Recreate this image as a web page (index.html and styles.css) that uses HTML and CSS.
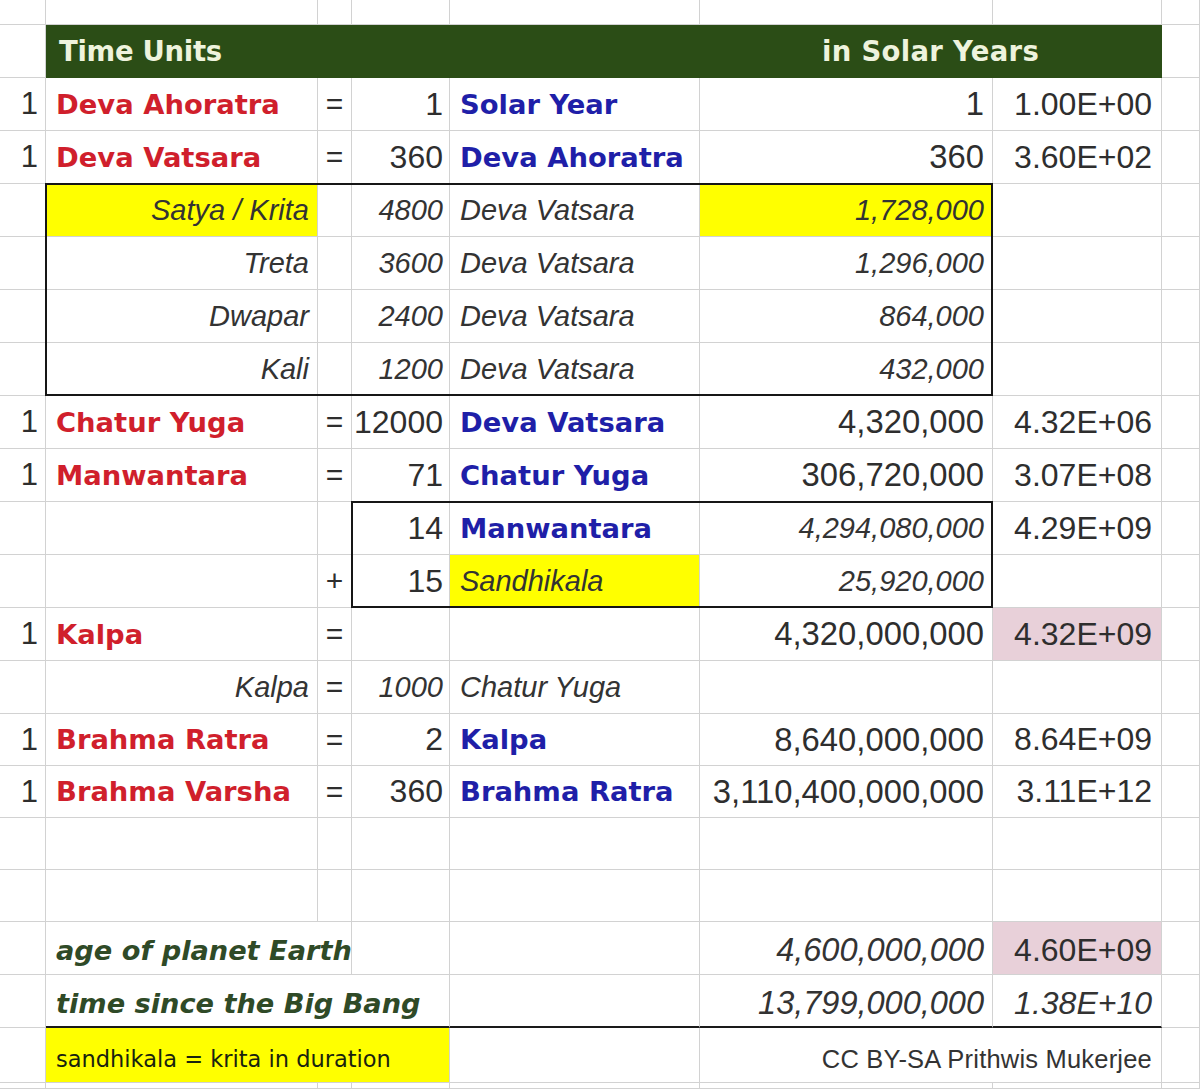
FILE: index.html
```html
<!DOCTYPE html>
<html>
<head>
<meta charset="utf-8">
<title>Time Units in Solar Years</title>
<link rel="stylesheet" href="styles.css">
</head>
<body>
<div class="stack">
<div class="sheet">
  <!-- row 0 (partial) -->
  <div class="c"></div><div class="c"></div><div class="c"></div><div class="c"></div><div class="c"></div><div class="c"></div><div class="c"></div><div class="c"></div>

  <!-- header -->
  <div class="c"></div>
  <div class="c hd hd-left span-be">Time Units</div>
  <div class="c hd hd-center span-fg">in Solar Years</div>
  <div class="c"></div>

  <!-- r1 -->
  <div class="c ca">1</div>
  <div class="c cb"><span class="term red">Deva Ahoratra</span></div>
  <div class="c cc">=</div>
  <div class="c cd">1</div>
  <div class="c ce"><span class="term blue">Solar Year</span></div>
  <div class="c cf">1</div>
  <div class="c cg">1.00E+00</div>
  <div class="c"></div>

  <!-- r2 -->
  <div class="c ca">1</div>
  <div class="c cb"><span class="term red">Deva Vatsara</span></div>
  <div class="c cc">=</div>
  <div class="c cd">360</div>
  <div class="c ce"><span class="term blue">Deva Ahoratra</span></div>
  <div class="c cf">360</div>
  <div class="c cg">3.60E+02</div>
  <div class="c"></div>

  <!-- r3 -->
  <div class="c ca"></div>
  <div class="c cb-r yel"><span class="it">Satya / Krita</span></div>
  <div class="c cc"></div>
  <div class="c cd"><span class="it">4800</span></div>
  <div class="c ce"><span class="it">Deva Vatsara</span></div>
  <div class="c cf yel"><span class="it">1,728,000</span></div>
  <div class="c cg"></div>
  <div class="c"></div>

  <!-- r4 -->
  <div class="c ca"></div>
  <div class="c cb-r"><span class="it">Treta</span></div>
  <div class="c cc"></div>
  <div class="c cd"><span class="it">3600</span></div>
  <div class="c ce"><span class="it">Deva Vatsara</span></div>
  <div class="c cf"><span class="it">1,296,000</span></div>
  <div class="c cg"></div>
  <div class="c"></div>

  <!-- r5 -->
  <div class="c ca"></div>
  <div class="c cb-r"><span class="it">Dwapar</span></div>
  <div class="c cc"></div>
  <div class="c cd"><span class="it">2400</span></div>
  <div class="c ce"><span class="it">Deva Vatsara</span></div>
  <div class="c cf"><span class="it">864,000</span></div>
  <div class="c cg"></div>
  <div class="c"></div>

  <!-- r6 -->
  <div class="c ca"></div>
  <div class="c cb-r"><span class="it">Kali</span></div>
  <div class="c cc"></div>
  <div class="c cd"><span class="it">1200</span></div>
  <div class="c ce"><span class="it">Deva Vatsara</span></div>
  <div class="c cf"><span class="it">432,000</span></div>
  <div class="c cg"></div>
  <div class="c"></div>

  <!-- r7 -->
  <div class="c ca">1</div>
  <div class="c cb"><span class="term red">Chatur Yuga</span></div>
  <div class="c cc">=</div>
  <div class="c cd">12000</div>
  <div class="c ce"><span class="term blue">Deva Vatsara</span></div>
  <div class="c cf">4,320,000</div>
  <div class="c cg">4.32E+06</div>
  <div class="c"></div>

  <!-- r8 -->
  <div class="c ca">1</div>
  <div class="c cb"><span class="term red">Manwantara</span></div>
  <div class="c cc">=</div>
  <div class="c cd">71</div>
  <div class="c ce"><span class="term blue">Chatur Yuga</span></div>
  <div class="c cf">306,720,000</div>
  <div class="c cg">3.07E+08</div>
  <div class="c"></div>

  <!-- r9 -->
  <div class="c ca"></div>
  <div class="c cb"></div>
  <div class="c cc"></div>
  <div class="c cd">14</div>
  <div class="c ce"><span class="term blue">Manwantara</span></div>
  <div class="c cf"><span class="it">4,294,080,000</span></div>
  <div class="c cg">4.29E+09</div>
  <div class="c"></div>

  <!-- r10 -->
  <div class="c ca"></div>
  <div class="c cb"></div>
  <div class="c cc">+</div>
  <div class="c cd">15</div>
  <div class="c ce yel"><span class="it">Sandhikala</span></div>
  <div class="c cf"><span class="it">25,920,000</span></div>
  <div class="c cg"></div>
  <div class="c"></div>

  <!-- r11 -->
  <div class="c ca">1</div>
  <div class="c cb"><span class="term red">Kalpa</span></div>
  <div class="c cc">=</div>
  <div class="c cd"></div>
  <div class="c ce"></div>
  <div class="c cf">4,320,000,000</div>
  <div class="c cg pink">4.32E+09</div>
  <div class="c"></div>

  <!-- r12 -->
  <div class="c ca"></div>
  <div class="c cb-r"><span class="it">Kalpa</span></div>
  <div class="c cc">=</div>
  <div class="c cd"><span class="it">1000</span></div>
  <div class="c ce"><span class="it">Chatur Yuga</span></div>
  <div class="c cf"></div>
  <div class="c cg"></div>
  <div class="c"></div>

  <!-- r13 -->
  <div class="c ca">1</div>
  <div class="c cb"><span class="term red">Brahma Ratra</span></div>
  <div class="c cc">=</div>
  <div class="c cd">2</div>
  <div class="c ce"><span class="term blue">Kalpa</span></div>
  <div class="c cf">8,640,000,000</div>
  <div class="c cg">8.64E+09</div>
  <div class="c"></div>

  <!-- r14 -->
  <div class="c ca">1</div>
  <div class="c cb"><span class="term red">Brahma Varsha</span></div>
  <div class="c cc">=</div>
  <div class="c cd">360</div>
  <div class="c ce"><span class="term blue">Brahma Ratra</span></div>
  <div class="c cf">3,110,400,000,000</div>
  <div class="c cg">3.11E+12</div>
  <div class="c"></div>

  <!-- r15 -->
  <div class="c"></div><div class="c"></div><div class="c"></div><div class="c"></div><div class="c"></div><div class="c"></div><div class="c"></div><div class="c"></div>
  <!-- r16 -->
  <div class="c"></div><div class="c"></div><div class="c"></div><div class="c"></div><div class="c"></div><div class="c"></div><div class="c"></div><div class="c"></div>

  <!-- r17 -->
  <div class="c ca low"></div>
  <div class="c cb span-bc low"><span class="note">age of planet Earth</span></div>
  <div class="c cd low"></div>
  <div class="c ce low"></div>
  <div class="c cf low"><span class="it big">4,600,000,000</span></div>
  <div class="c cg pink low">4.60E+09</div>
  <div class="c low"></div>

  <!-- r18 -->
  <div class="c ca low"></div>
  <div class="c cb span-bd rule low"><span class="note">time since the Big Bang</span></div>
  <div class="c ce rule low"></div>
  <div class="c cf rule low"><span class="it big">13,799,000,000</span></div>
  <div class="c cg rule low"><span class="it big">1.38E+10</span></div>
  <div class="c low"></div>

  <!-- r19 -->
  <div class="c ca foot-row"></div>
  <div class="c cb span-bd yel foot-row"><span class="foot">sandhikala = krita in duration</span></div>
  <div class="c ce foot-row"></div>
  <div class="c cg span-fg foot-row"><span class="credit">CC BY-SA Prithwis Mukerjee</span></div>
  <div class="c foot-row"></div>

  <!-- r20 (partial) -->
  <div class="c"></div><div class="c"></div><div class="c"></div><div class="c"></div><div class="c"></div><div class="c"></div><div class="c"></div><div class="c"></div>
</div>

<div class="sheet overlay">
  <div class="box box-yuga"></div>
  <div class="box box-manu"></div>
</div>
</div>
</body>
</html>
```

FILE: styles.css
```css
html, body {
  margin: 0;
  padding: 0;
  background: #ffffff;
}

.stack {
  display: grid;
  width: 1200px;
  height: 1089px;
  overflow: hidden;
}

.sheet {
  grid-area: 1 / 1;
  display: grid;
  grid-template-columns: 46px 272px 34px 98px 250px 293px 169px 38px;
  grid-template-rows: 25px 53px repeat(12, 53px) 52px 52px 52px 52px 53px 53px 55px 1fr;
  height: 1089px;
  width: 1200px;
}

.overlay {
  pointer-events: none;
}

.c {
  box-sizing: border-box;
  border-right: 1px solid #d2d2d2;
  border-bottom: 1px solid #d2d2d2;
  display: flex;
  align-items: center;
  white-space: nowrap;
  min-width: 0;
  font-family: "Liberation Sans", Arial, sans-serif;
  font-size: 32.8px;
  color: #2e2e2e;
}

/* columns */
.ca { justify-content: flex-end; padding-right: 7px; font-size: 31px; }
.cb { justify-content: flex-start; padding-left: 10px; }
.cb-r { justify-content: flex-end; padding-right: 8px; }
.cc { justify-content: center; font-size: 30px; }
.cd { justify-content: flex-end; padding-right: 6px; font-size: 32px; }
.ce { justify-content: flex-start; padding-left: 10px; }
.cf { justify-content: flex-end; padding-right: 8px; }
.cg { justify-content: flex-end; padding-right: 9px; font-size: 32px; }

/* merged cells */
.span-be { grid-column: 2 / 6; }
.span-fg { grid-column: 6 / 8; }
.span-bc { grid-column: 2 / 4; }
.span-bd { grid-column: 2 / 5; }

/* vertical offsets for the lower rows */
.low { padding-top: 5px; }
.foot-row { padding-top: 8px; }

/* header */
.hd {
  background: #2b4d16;
  border-color: #2b4d16;
  font-family: "DejaVu Sans", Verdana, sans-serif;
  font-weight: bold;
  font-size: 27.5px;
  color: #eef3dd;
}
.hd-left { padding-left: 13px; letter-spacing: -0.3px; }
.hd-center { justify-content: center; letter-spacing: 0.3px; }

/* text styles */
.term {
  font-family: "DejaVu Sans", Verdana, sans-serif;
  font-weight: bold;
  font-size: 27.4px;
}
.red { color: #d01f2c; }
.blue { color: #1f1fa8; }

.it {
  font-style: italic;
  font-size: 29px;
  color: #333333;
}
.it.big { font-size: 32.5px; }
.cg .it.big { font-size: 32px; }

.note {
  font-family: "DejaVu Sans", Verdana, sans-serif;
  font-weight: bold;
  font-style: italic;
  font-size: 27.2px;
  color: #2f4a27;
}

.foot {
  font-family: "DejaVu Sans", Verdana, sans-serif;
  font-size: 22.5px;
  color: #18230f;
}

.credit {
  font-family: "Liberation Sans", Arial, sans-serif;
  font-size: 25.5px;
  color: #333333;
  letter-spacing: 0.2px;
}

/* fills */
.yel { background: #ffff00; }
.pink { background: #e8d0d9; }

/* thick rule above the footer row */
.rule { border-bottom: 2px solid #1a1a1a; }

/* outlined blocks */
.box {
  border: 2px solid #161616;
  margin: -1px 0 0 -1px;
}
.box-yuga { grid-column: 2 / 7; grid-row: 5 / 9; }
.box-manu { grid-column: 4 / 7; grid-row: 11 / 13; }
```
